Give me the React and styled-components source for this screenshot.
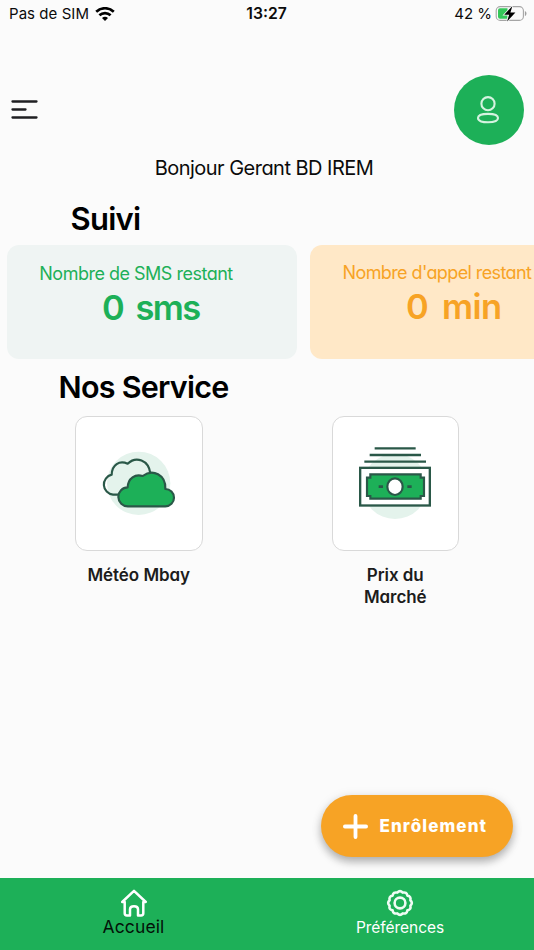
import React from "react";
import styled, { createGlobalStyle } from "styled-components";

const GlobalStyle = createGlobalStyle`
  * { box-sizing: border-box; }
  body {
    margin: 0;
    background: #fbfbfb;
    overflow: hidden;
    font-family: Inter, sans-serif;
  }
`;

const Screen = styled.div`
  display: flex;
  flex-direction: column;
  width: 534px;
  height: 950px;
  overflow: hidden;
  color: #0b0b0b;
  background: #fbfbfb;
`;

const StatusBar = styled.header`
  display: grid;
  grid-template-columns: 1fr auto 1fr;
  align-items: center;
  height: 28px;
  padding: 0 7px 0 9px;
  font-size: 15px;
  line-height: 28px;
  white-space: nowrap;
`;

const StatusGroup = styled.div`
  display: flex;
  align-items: center;
  justify-content: ${({ $end }) => ($end ? "flex-end" : "flex-start")};
  gap: ${({ $end }) => ($end ? 3 : 5.5)}px;
  letter-spacing: ${({ $end }) => ($end ? 0 : 0.05)}px;
  svg { display: block; }
`;

const Clock = styled.div`
  padding-right: 3px;
  font-size: 15.7px;
  font-weight: 600;
`;

const TopBar = styled.div`
  display: flex;
  align-items: center;
  justify-content: space-between;
  height: 70px;
  margin-top: 47px;
  padding: 0 10.5px 0 11px;
`;

const MenuButton = styled.button`
  display: block;
  padding: 0;
  border: 0;
  background: none;
  svg { display: block; }
`;

const Avatar = styled.div`
  display: flex;
  align-items: center;
  justify-content: center;
  width: 70px;
  height: 70px;
  padding-right: 1px;
  border-radius: 50%;
  background: #1db058;
`;

const Greeting = styled.p`
  margin: 8px 0 0;
  padding-right: 6px;
  font-size: 20px;
  line-height: 31px;
  letter-spacing: -0.53px;
  text-align: center;
  font-feature-settings: "cv11";
`;

const SectionTitle = styled.h2`
  margin: ${({ $top }) => $top}px 0 0 ${({ $left }) => $left}px;
  font-size: ${({ $size }) => $size}px;
  font-weight: 600;
  line-height: 40px;
  letter-spacing: -0.75px;
  color: #000;
`;

const Counters = styled.div`
  display: flex;
  gap: 13px;
  margin-top: 6px;
  padding-left: 7px;
`;

const CounterCard = styled.section`
  flex: 0 0 289.5px;
  height: 114px;
  padding-top: ${({ $top }) => $top}px;
  border-radius: 12px;
  color: ${({ $color }) => $color};
  background: ${({ $bg }) => $bg};
  font-feature-settings: "cv11";
  white-space: nowrap;
`;

const CounterLabel = styled.div`
  padding-left: ${({ $left }) => $left}px;
  font-size: 18px;
  line-height: 25px;
  letter-spacing: ${({ $tracking }) => $tracking}px;
`;

const CounterValue = styled.div`
  padding-left: ${({ $left }) => $left}px;
  font-size: 34.5px;
  font-weight: 600;
  line-height: 44px;
  letter-spacing: ${({ $tracking }) => $tracking}px;
  word-spacing: 5.5px;
`;

const Services = styled.div`
  display: flex;
  gap: 129px;
  margin-top: 9.5px;
  padding-left: 75px;
`;

const Service = styled.div`
  width: 127.5px;
  font-size: 17px;
  font-weight: 600;
  line-height: 22px;
  letter-spacing: -0.05px;
  text-align: center;
  color: #1c1c1c;
  font-feature-settings: "cv11";
`;

const ServiceTile = styled.div`
  height: 135px;
  margin-bottom: 13px;
  border: 1px solid #d9d9d9;
  border-radius: 12px;
  background: #fff;
  svg { display: block; margin: -1px; }
`;

const EnrollButton = styled.button`
  display: flex;
  align-items: center;
  gap: 12px;
  width: 192px;
  height: 62px;
  margin: auto 21px 20.5px auto;
  padding: 0 0 0 21.5px;
  border: 0;
  border-radius: 31px;
  background: #f7a325;
  box-shadow: 0 5px 9px rgba(0, 0, 0, 0.27), 0 1px 12px rgba(0, 0, 0, 0.08);
  color: #fff;
  font: 800 17px/62px Inter, sans-serif;
  letter-spacing: 1.1px;
  svg { display: block; }
`;

const TabBar = styled.nav`
  display: grid;
  grid-template-columns: 1fr 1fr;
  height: 72.5px;
  background: #1db058;
`;

const Tab = styled.a`
  display: flex;
  flex-direction: column;
  align-items: center;
  padding: 11px ${({ $active }) => ($active ? 0 : 1)}px 0 0;
  font-size: ${({ $active }) => ($active ? 17.5 : 15.5)}px;
  line-height: ${({ $active }) => ($active ? 20 : 22)}px;
  letter-spacing: ${({ $active }) => ($active ? 0.1 : -0.05)}px;
  color: ${({ $active }) => ($active ? "#031208" : "#fff")};
  svg { display: block; }
`;

const WifiIcon = () => (
  <svg width="20" height="15" viewBox="0 0 20 15" fill="none" stroke="#000" strokeWidth="2.7">
    <path d="M1.2 4.7C6.2.1 13.8.1 18.8 4.7" />
    <path d="M4.4 8.2C7.6 5.3 12.4 5.3 15.6 8.2" />
    <path d="M10 13.9 7 11C8.7 9.4 11.3 9.4 13 11Z" fill="#000" stroke="none" />
  </svg>
);

const BatteryIcon = () => (
  <svg width="32" height="16" viewBox="0 0 32 16">
    <rect x="1.2" y="0.6" width="27.2" height="13.8" rx="4" fill="none" stroke="#a5a5a5" strokeWidth="1.1" />
    <path d="M29.9 4.9c2.1.8 2.1 4.3 0 5.1z" fill="#a0a0a0" />
    <path d="M5 2.3H12.5v10.400H5Q3 12.700 3 10.700V4.300Q3 2.300 5 2.300Z" fill="#34c759" />
    <path d="M17.400 0 9.200 8.700h4.900l-2 6.900 8.300-9h-5z" fill="#000" stroke="#fbfbfb" strokeWidth="1.5" paintOrder="stroke" />
  </svg>
);

const MenuIcon = () => (
  <svg width="27" height="20" viewBox="0 0 27 20" fill="none" stroke="#1f1f22" strokeWidth="2.3" strokeLinecap="round">
    <path d="M1.5 1.500h24M1.500 9.500h13M1.500 17.500h24" />
  </svg>
);

const UserIcon = () => (
  <svg width="24" height="30" viewBox="0 0 24 30" fill="none" stroke="#d5f3e0" strokeWidth="2.1">
    <circle cx="12" cy="8.7" r="6.6" />
    <path d="M12 18.900C17.200 18.900 22 19.800 22 23.100S17.200 27.300 12 27.300 2 26.400 2 23.100 6.800 18.900 12 18.900Z" />
  </svg>
);

const CloudsIcon = () => (
  <svg width="127.500" height="135" viewBox="15 18 382.500 405" stroke="#2a5848" strokeWidth="6.5" strokeLinejoin="round">
    <circle cx="206" cy="220" r="95" fill="#e4f3ec" stroke="none" />
    <path d="M150 254H129A30.500 30.500 0 0 1 125 194C126 164 148 150 173 161C198 137 236 150 241 190" fill="none" />
    <path d="M174 289A28.500 28.500 0 0 1 173 232C174 204 196 191 218 198C248 175 288 194 286 237A26 26 0 0 1 286 289Z" fill="#1db058" />
  </svg>
);

const BanknotesIcon = () => (
  <svg width="127.500" height="135" viewBox="21 18 382.500 405" fill="none" stroke="#2a5848" strokeWidth="7">
    <circle cx="210" cy="229" r="98" fill="#e4f3ec" stroke="none" />
    <path d="M149 115H272M134 135H288M118 155H303" />
    <rect x="105.500" y="173.500" width="209" height="113" fill="#fff" />
    <path d="M136 193H287V203H297V258H287V266H136V258H126V203H136Z" fill="#1db058" strokeWidth="6.5" />
    <ellipse cx="210" cy="230" rx="23" ry="25" fill="#fff" strokeWidth="6.5" />
    <path d="M161 230H174M247 230H260" strokeWidth="8" />
  </svg>
);

const PlusIcon = () => (
  <svg width="25" height="25" viewBox="0 0 25 25" fill="none" stroke="#fff" strokeWidth="3.8" strokeLinecap="round">
    <path d="M12.500 1.900v21.200M1.900 12.500h21.200" />
  </svg>
);

const HomeIcon = () => (
  <svg width="28" height="28" viewBox="0 0 28 28" fill="none" stroke="#fff" strokeWidth="2.5" strokeLinecap="round" strokeLinejoin="round">
    <path d="M4.700 13H2.200L14 1.900 25.800 13H23.300V24.200Q23.300 26.400 21.100 26.400H18V20.200Q18 17.200 14 17.200T10 20.200V26.400H6.900Q4.700 26.400 4.700 24.200V13" />
  </svg>
);

const GearIcon = () => (
  <svg width="28" height="28" viewBox="0 0 28 28" fill="none" stroke="#effcf4" strokeWidth="2.6" strokeLinejoin="round">
    <path d="M11.300 3.600Q14 .7 16.700 3.600Q20.800 2.700 21.400 6.600Q25.300 7.200 24.400 11.300Q27.300 14 24.400 16.700Q25.300 20.800 21.400 21.400Q20.800 25.300 16.700 24.400Q14 27.300 11.300 24.400Q7.200 25.300 6.600 21.400Q2.700 20.800 3.600 16.700Q.7 14 3.600 11.300Q2.700 7.200 6.600 6.600Q7.200 2.700 11.300 3.600Z" />
    <circle cx="14" cy="14" r="5.4" />
  </svg>
);

export default function App() {
  return (
    <Screen>
      <GlobalStyle />
      <StatusBar>
        <StatusGroup><span>Pas de SIM</span><WifiIcon /></StatusGroup>
        <Clock>13:27</Clock>
        <StatusGroup $end><span>42 %</span><BatteryIcon /></StatusGroup>
      </StatusBar>
      <TopBar>
        <MenuButton aria-label="Menu"><MenuIcon /></MenuButton>
        <Avatar><UserIcon /></Avatar>
      </TopBar>
      <Greeting>Bonjour Gerant BD IREM</Greeting>
      <SectionTitle $top={15} $left={70.5} $size={31}>Suivi</SectionTitle>
      <Counters>
        <CounterCard $top={16} $color="#1db058" $bg="#eff4f3">
          <CounterLabel $left={32.3} $tracking={-0.5}>Nombre de SMS restant</CounterLabel>
          <CounterValue $left={95} $tracking={-1.7}>0 sms</CounterValue>
        </CounterCard>
        <CounterCard $top={15} $color="#f7a325" $bg="#ffe8c7">
          <CounterLabel $left={33} $tracking={-0.6}>Nombre d'appel restant</CounterLabel>
          <CounterValue $left={96.5} $tracking={-0.5}>0 min</CounterValue>
        </CounterCard>
      </Counters>
      <SectionTitle $top={7.5} $left={58.5} $size={30.5}>Nos Service</SectionTitle>
      <Services>
        <Service><ServiceTile><CloudsIcon /></ServiceTile>Météo Mbay</Service>
        <Service><ServiceTile><BanknotesIcon /></ServiceTile>Prix du<br />Marché</Service>
      </Services>
      <EnrollButton><PlusIcon />Enrôlement</EnrollButton>
      <TabBar>
        <Tab $active><HomeIcon />Accueil</Tab>
        <Tab><GearIcon />Préférences</Tab>
      </TabBar>
    </Screen>
  );
}
